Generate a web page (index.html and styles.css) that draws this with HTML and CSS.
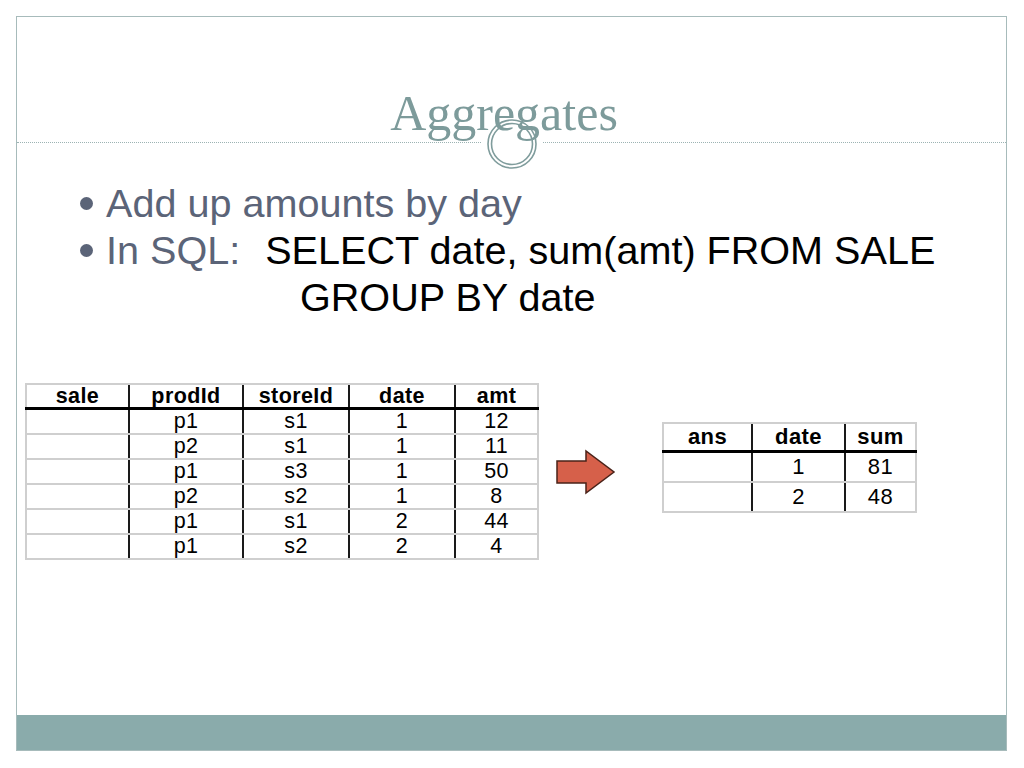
FILE: index.html
```html
<!DOCTYPE html>
<html lang="en">
<head>
<meta charset="utf-8">
<title>Aggregates</title>
<link rel="stylesheet" href="styles.css">
</head>
<body>
<div class="slide">
  <header class="title-area">
    <h1 class="title">Aggregates</h1>
  </header>
  <div class="divider">
    <span class="rule"></span>
    <span class="rule"></span>
    <svg class="ring" width="54" height="54" viewBox="0 0 54 54" aria-hidden="true">
      <circle cx="27" cy="27" r="24" fill="none" stroke="#7f9c9c" stroke-width="1.6"/>
      <circle cx="27" cy="27" r="20.5" fill="none" stroke="#7f9c9c" stroke-width="1.6"/>
    </svg>
  </div>
  <ul class="bullets">
    <li><span class="dot"></span>Add up amounts by day</li>
    <li><span class="dot"></span>In SQL:<span class="sql first">SELECT date, sum(amt) FROM SALE</span></li>
    <li class="cont"><span class="sql">GROUP BY date</span></li>
  </ul>
  <div class="figures">
    <table class="rel sale">
      <colgroup><col class="c1"><col class="c2"><col class="c3"><col class="c4"><col class="c5"></colgroup>
      <thead>
        <tr><th>sale</th><th>prodId</th><th>storeId</th><th>date</th><th>amt</th></tr>
      </thead>
      <tbody>
        <tr><td></td><td>p1</td><td>s1</td><td>1</td><td>12</td></tr>
        <tr><td></td><td>p2</td><td>s1</td><td>1</td><td>11</td></tr>
        <tr><td></td><td>p1</td><td>s3</td><td>1</td><td>50</td></tr>
        <tr><td></td><td>p2</td><td>s2</td><td>1</td><td>8</td></tr>
        <tr><td></td><td>p1</td><td>s1</td><td>2</td><td>44</td></tr>
        <tr><td></td><td>p1</td><td>s2</td><td>2</td><td>4</td></tr>
      </tbody>
    </table>
    <svg class="arrow" width="60" height="46" viewBox="0 0 60 46" aria-hidden="true">
      <path d="M1 12 H30 V2 L58 23 L30 44 V34 H1 Z" fill="#d6604a" stroke="#4a2219" stroke-width="1.5" stroke-linejoin="miter"/>
    </svg>
    <table class="rel ans">
      <colgroup><col class="a1"><col class="a2"><col class="a3"></colgroup>
      <thead>
        <tr><th>ans</th><th>date</th><th>sum</th></tr>
      </thead>
      <tbody>
        <tr><td></td><td>1</td><td>81</td></tr>
        <tr><td></td><td>2</td><td>48</td></tr>
      </tbody>
    </table>
  </div>
  <div class="footer-bar"></div>
</div>
</body>
</html>
```

FILE: styles.css
```css
html, body {
  margin: 0;
  padding: 0;
  background: #ffffff;
}

.slide {
  box-sizing: border-box;
  margin: 16px;
  width: 991px;
  height: 735px;
  border: 1px solid #a7bbbb;
  display: flex;
  flex-direction: column;
  background: #ffffff;
}

.title-area {
  padding-top: 71px;
  padding-right: 15px;
}

.title {
  margin: 0;
  font-family: "Liberation Serif", "Times New Roman", serif;
  font-weight: normal;
  font-size: 50px;
  line-height: 50px;
  color: #7d9b9b;
  text-align: center;
}

.divider {
  position: relative;
  margin-top: 4px;
  height: 1px;
  display: flex;
  gap: 62px;
}

.rule {
  flex: 1;
  border-top: 1px dotted #9cb3b3;
}

.ring {
  position: absolute;
  left: calc(50% - 27px);
  top: -25px;
}

.bullets {
  list-style: none;
  margin: 37px 0 0 0;
  padding: 0 0 0 63px;
  font-family: "Liberation Sans", Arial, sans-serif;
  font-size: 39.6px;
  line-height: 47px;
  color: #5b6478;
}

.dot {
  display: inline-block;
  width: 13px;
  height: 13px;
  border-radius: 50%;
  background: #5b6478;
  margin-right: 13px;
  vertical-align: 7px;
}

.sql {
  color: #000000;
}

.sql.first {
  margin-left: 25px;
}

.cont {
  padding-left: 220px;
}

.figures {
  display: flex;
  align-items: flex-start;
  margin-top: 62px;
  padding-left: 8px;
}

.rel {
  border-collapse: collapse;
  table-layout: fixed;
  font-family: "Liberation Sans", Arial, sans-serif;
  color: #000000;
  letter-spacing: 0.4px;
}

.rel th,
.rel td {
  padding: 0;
  text-align: center;
  border-top: 2px solid #cfcfcf;
  border-bottom: 2px solid #cfcfcf;
  border-left: 2px solid #1a1a1a;
  border-right: none;
}

.rel th:first-child,
.rel td:first-child {
  border-left: 2px solid #cfcfcf;
}

.rel th:last-child,
.rel td:last-child {
  border-right: 2px solid #cfcfcf;
}

.rel th {
  font-weight: bold;
  border-bottom: 3px solid #000000;
}

.sale {
  width: 512px;
  font-size: 21.5px;
}

.sale th {
  height: 22px;
  line-height: 22px;
}

.sale td {
  height: 23px;
  line-height: 23px;
}

.sale .c1 { width: 103px; }
.sale .c2 { width: 114px; }
.sale .c3 { width: 106px; }
.sale .c4 { width: 106px; }
.sale .c5 { width: 83px; }

.arrow {
  margin-left: 17px;
  margin-top: 66px;
  flex: none;
}

.ans {
  width: 253px;
  margin-left: 46px;
  margin-top: 39px;
  font-size: 22px;
}

.ans th {
  height: 26px;
  line-height: 26px;
}

.ans td {
  height: 28px;
  line-height: 28px;
}

.ans .a1 { width: 89px; }
.ans .a2 { width: 93px; }
.ans .a3 { width: 71px; }

.footer-bar {
  margin-top: auto;
  height: 35px;
  background: #8aabab;
}
```
